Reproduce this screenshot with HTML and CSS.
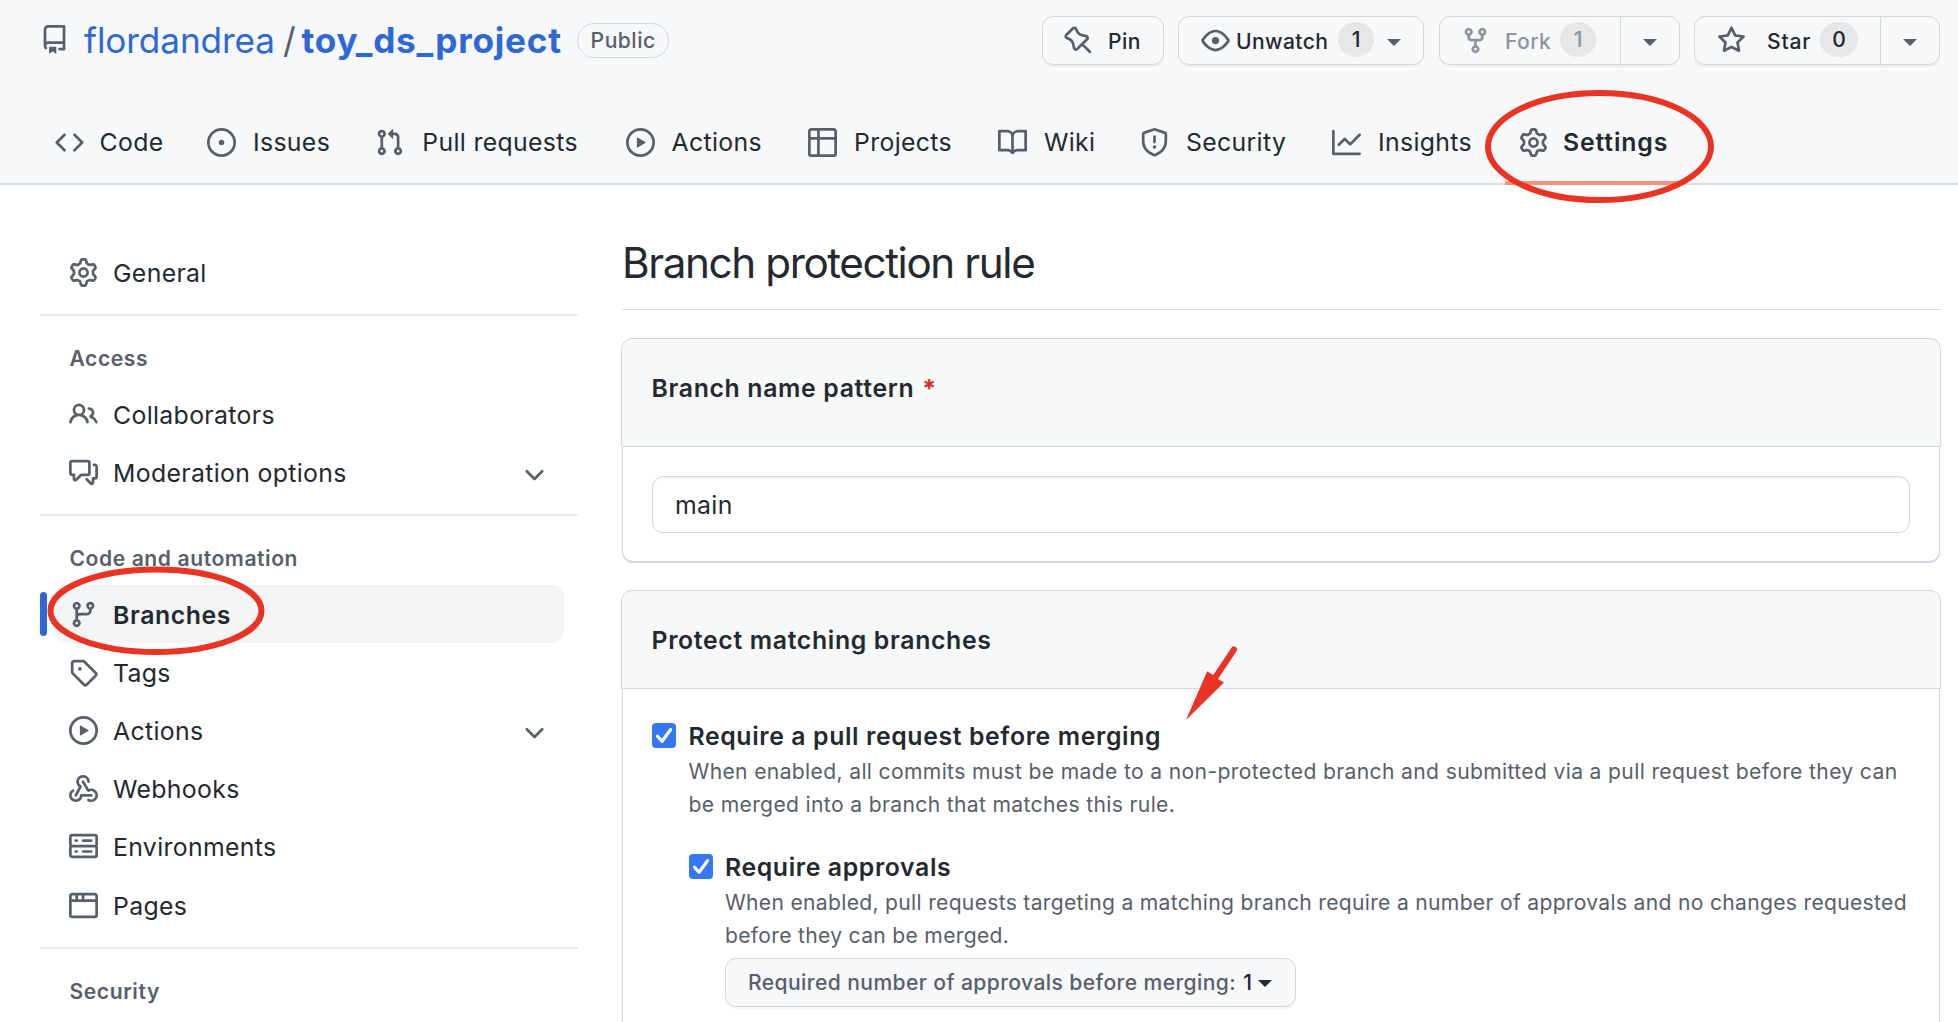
FILE: index.html
```
<!DOCTYPE html>
<html lang="en">
<head>
<meta charset="utf-8">
<title>Branch protection rule</title>
<link rel="stylesheet" href="styles.css">
</head>
<body>
<svg class="sprite" aria-hidden="true">
  <symbol id="repo" viewBox="0 0 16 16"><path d="M2 2.5A2.5 2.5 0 014.5 0h8.75a.75.75 0 01.75.75v12.5a.75.75 0 01-.75.75h-2.5a.75.75 0 110-1.5h1.75v-2h-8a1 1 0 00-.714 1.7.75.75 0 01-1.072 1.05A2.495 2.495 0 012 11.5v-9zm10.5-1V9h-8c-.356 0-.694.074-1 .208V2.5a1 1 0 011-1h8zM5 12.25v3.25a.25.25 0 00.4.2l1.45-1.087a.25.25 0 01.3 0L8.6 15.7a.25.25 0 00.4-.2v-3.25a.25.25 0 00-.25-.25h-3.5a.25.25 0 00-.25.25z"/></symbol>
  <symbol id="pin" viewBox="0 0 16 16"><path d="M4.456.734a1.75 1.75 0 012.826.504l.613 1.327a3.081 3.081 0 002.084 1.707l2.454.584c1.332.317 1.8 1.972.832 2.94L11.06 10l3.72 3.72a.75.75 0 11-1.061 1.06L10 11.06l-2.204 2.205c-.968.968-2.623.5-2.94-.832l-.584-2.454a3.081 3.081 0 00-1.707-2.084l-1.327-.613a1.75 1.75 0 01-.504-2.826L4.456.734zM5.92 1.866a.25.25 0 00-.404-.072L1.794 5.516a.25.25 0 00.072.404l1.328.613A4.582 4.582 0 015.73 9.63l.584 2.454a.25.25 0 00.42.12l5.47-5.47a.25.25 0 00-.12-.42L9.63 5.73a4.581 4.581 0 01-3.098-2.537L5.92 1.866z"/></symbol>
  <symbol id="eye" viewBox="0 0 16 16"><path d="M1.679 7.932c.412-.621 1.242-1.75 2.366-2.717C5.175 4.242 6.527 3.5 8 3.5c1.473 0 2.824.742 3.955 1.715 1.124.967 1.954 2.096 2.366 2.717a.119.119 0 010 .136c-.412.621-1.242 1.75-2.366 2.717C10.825 11.758 9.473 12.5 8 12.5c-1.473 0-2.824-.742-3.955-1.715C2.92 9.818 2.09 8.69 1.679 8.068a.119.119 0 010-.136zM8 2c-1.981 0-3.67.992-4.933 2.078C1.797 5.169.88 6.423.43 7.1a1.619 1.619 0 000 1.798c.45.678 1.367 1.932 2.637 3.024C4.329 13.008 6.019 14 8 14c1.981 0 3.67-.992 4.933-2.078 1.27-1.091 2.187-2.345 2.637-3.023a1.619 1.619 0 000-1.798c-.45-.678-1.367-1.932-2.637-3.023C11.671 2.992 9.981 2 8 2zm0 8a2 2 0 100-4 2 2 0 000 4z"/></symbol>
  <symbol id="fork" viewBox="0 0 16 16"><path d="M5 3.25a.75.75 0 11-1.5 0 .75.75 0 011.5 0zm0 2.122a2.25 2.25 0 10-1.5 0v.878A2.25 2.25 0 005.75 8.5h1.5v2.128a2.251 2.251 0 101.5 0V8.5h1.5a2.25 2.25 0 002.25-2.25v-.878a2.25 2.25 0 10-1.5 0v.878a.75.75 0 01-.75.75h-4.5A.75.75 0 015 6.25v-.878zm3.75 7.378a.75.75 0 11-1.5 0 .75.75 0 011.5 0zm3-8.75a.75.75 0 100-1.5.75.75 0 000 1.5z"/></symbol>
  <symbol id="star" viewBox="0 0 16 16"><path d="M8 .25a.75.75 0 01.673.418l1.882 3.815 4.21.612a.75.75 0 01.416 1.279l-3.046 2.97.719 4.192a.75.75 0 01-1.088.791L8 12.347l-3.766 1.98a.75.75 0 01-1.088-.79l.72-4.194L.818 6.374a.75.75 0 01.416-1.28l4.21-.611L7.327.668A.75.75 0 018 .25zm0 2.445L6.615 5.5a.75.75 0 01-.564.41l-3.097.45 2.24 2.184a.75.75 0 01.216.664l-.528 3.084 2.769-1.456a.75.75 0 01.698 0l2.77 1.456-.53-3.084a.75.75 0 01.216-.664l2.24-2.183-3.096-.45a.75.75 0 01-.564-.41L8 2.694v.001z"/></symbol>
  <symbol id="code" viewBox="0 0 16 16"><path d="M4.72 3.22a.75.75 0 011.06 1.06L2.06 8l3.72 3.72a.75.75 0 11-1.06 1.06L.47 8.53a.75.75 0 010-1.06l4.25-4.25zm6.56 0a.75.75 0 10-1.06 1.06L13.94 8l-3.72 3.72a.75.75 0 101.06 1.06l4.25-4.25a.75.75 0 000-1.06l-4.25-4.25z"/></symbol>
  <symbol id="issue" viewBox="0 0 16 16"><path d="M8 9.5a1.5 1.5 0 100-3 1.5 1.5 0 000 3zM8 0a8 8 0 100 16A8 8 0 008 0zM1.5 8a6.5 6.5 0 1113 0 6.5 6.5 0 01-13 0z"/></symbol>
  <symbol id="pull" viewBox="0 0 16 16"><path d="M7.177 3.073L9.573.677A.25.25 0 0110 .854v4.792a.25.25 0 01-.427.177L7.177 3.427a.25.25 0 010-.354zM3.75 2.5a.75.75 0 100 1.5.75.75 0 000-1.5zm-2.25.75a2.25 2.25 0 113 2.122v5.256a2.251 2.251 0 11-1.5 0V5.372A2.25 2.25 0 011.5 3.25zM11 2.5h-1V4h1a1 1 0 011 1v5.628a2.251 2.251 0 101.5 0V5A2.5 2.5 0 0011 2.5zm1 10.25a.75.75 0 111.5 0 .75.75 0 01-1.5 0zM3.75 12a.75.75 0 100 1.5.75.75 0 000-1.5z"/></symbol>
  <symbol id="play" viewBox="0 0 16 16"><path d="M1.5 8a6.5 6.5 0 1113 0 6.5 6.5 0 01-13 0zM8 0a8 8 0 100 16A8 8 0 008 0zM6.379 5.227A.25.25 0 006 5.442v5.117a.25.25 0 00.379.214l4.264-2.559a.25.25 0 000-.428L6.379 5.227z"/></symbol>
  <symbol id="table" viewBox="0 0 16 16"><path d="M0 1.75C0 .784.784 0 1.75 0h12.5C15.216 0 16 .784 16 1.75v12.5A1.75 1.75 0 0114.25 16H1.75A1.75 1.75 0 010 14.25V1.75zM1.5 6.5v7.75c0 .138.112.25.25.25H5v-8H1.5zM5 5H1.5V1.75a.25.25 0 01.25-.25H5V5zm1.5 1.5v8h7.75a.25.25 0 00.25-.25V6.5h-8zm8-1.5h-8V1.5h7.75a.25.25 0 01.25.25V5z"/></symbol>
  <symbol id="book" viewBox="0 0 16 16"><path d="M0 1.75A.75.75 0 01.75 1h4.253c1.227 0 2.317.59 3 1.501A3.744 3.744 0 0111.006 1h4.245a.75.75 0 01.75.75v10.5a.75.75 0 01-.75.75h-4.507a2.25 2.25 0 00-1.591.659l-.622.621a.75.75 0 01-1.06 0l-.622-.621A2.25 2.25 0 005.258 13H.75a.75.75 0 01-.75-.75V1.75zm8.755 3a2.25 2.25 0 012.25-2.25H14.5v9h-3.757c-.71 0-1.4.201-1.992.572l.004-7.322zm-1.504 7.324l.004-5.073-.002-2.253A2.25 2.25 0 005.003 2.5H1.5v9h3.757a3.75 3.75 0 011.994.574z"/></symbol>
  <symbol id="shield" viewBox="0 0 16 16"><path d="M7.467.133a1.75 1.75 0 011.066 0l5.25 1.68A1.75 1.75 0 0115 3.48V7c0 1.566-.32 3.182-1.303 4.682-.983 1.498-2.585 2.813-5.032 3.855a1.7 1.7 0 01-1.33 0c-2.447-1.042-4.049-2.357-5.032-3.855C1.32 10.182 1 8.566 1 7V3.48a1.75 1.75 0 011.217-1.667l5.25-1.68zm.61 1.429a.25.25 0 00-.153 0l-5.25 1.68a.25.25 0 00-.174.238V7c0 1.358.275 2.666 1.057 3.86.784 1.194 2.121 2.34 4.366 3.297a.2.2 0 00.154 0c2.245-.956 3.582-2.104 4.366-3.298C13.225 9.666 13.5 8.36 13.5 7V3.48a.25.25 0 00-.174-.237l-5.25-1.68zM9 10.5a1 1 0 11-2 0 1 1 0 012 0zm-.25-5.75a.75.75 0 10-1.5 0v3a.75.75 0 001.5 0v-3z"/></symbol>
  <symbol id="graph" viewBox="0 0 16 16"><path d="M1.5 1.75a.75.75 0 00-1.5 0v12.5c0 .414.336.75.75.75h14.5a.75.75 0 000-1.5H1.5V1.75zm14.28 2.53a.75.75 0 00-1.06-1.06L10 7.94 7.53 5.47a.75.75 0 00-1.06 0L3.22 8.72a.75.75 0 001.06 1.06L7 7.06l2.47 2.47a.75.75 0 001.06 0l5.25-5.25z"/></symbol>
  <symbol id="gear" viewBox="0 0 16 16"><path d="M8 0a8.2 8.2 0 0 1 .701.031C9.444.095 9.99.645 10.16 1.29l.288 1.107c.018.066.079.158.212.224.231.114.454.243.668.386.123.082.233.09.299.071l1.103-.303c.644-.176 1.392.021 1.82.63.27.385.506.792.704 1.218.315.675.111 1.422-.364 1.891l-.814.806c-.049.048-.098.147-.088.294.016.257.016.515 0 .772-.01.147.038.246.088.294l.814.806c.475.469.679 1.216.364 1.891a7.977 7.977 0 0 1-.704 1.217c-.428.61-1.176.807-1.82.63l-1.102-.302c-.067-.019-.177-.011-.3.071a5.909 5.909 0 0 1-.668.386c-.133.066-.194.158-.211.224l-.29 1.106c-.168.646-.715 1.196-1.458 1.26a8.006 8.006 0 0 1-1.402 0c-.743-.064-1.289-.614-1.458-1.26l-.289-1.106c-.018-.066-.079-.158-.212-.224a5.738 5.738 0 0 1-.668-.386c-.123-.082-.233-.09-.299-.071l-1.103.303c-.644.176-1.392-.021-1.82-.63a8.12 8.12 0 0 1-.704-1.218c-.315-.675-.111-1.422.363-1.891l.815-.806c.05-.048.098-.147.088-.294a6.214 6.214 0 0 1 0-.772c.01-.147-.038-.246-.088-.294l-.815-.806C.635 6.045.431 5.298.746 4.623a7.92 7.92 0 0 1 .704-1.217c.428-.61 1.176-.807 1.82-.63l1.102.302c.067.019.177.011.3-.071.214-.143.437-.272.668-.386.133-.066.194-.158.211-.224l.29-1.106C6.009.645 6.556.095 7.299.03 7.53.01 7.764 0 8 0Zm-.571 1.525c-.036.003-.108.036-.137.146l-.289 1.105c-.147.561-.549.967-.998 1.189-.173.086-.34.183-.5.29-.417.278-.97.423-1.529.27l-1.103-.303c-.109-.03-.175.016-.195.045-.22.312-.412.644-.573.99-.014.031-.021.11.059.19l.815.806c.411.406.562.957.53 1.456a4.709 4.709 0 0 0 0 .582c.032.499-.119 1.05-.53 1.456l-.815.806c-.081.08-.073.159-.059.19.162.346.353.677.573.989.02.03.085.076.195.046l1.102-.303c.56-.153 1.113-.008 1.53.27.161.107.328.204.501.29.447.222.85.629.997 1.189l.289 1.105c.029.109.101.143.137.146a6.6 6.6 0 0 0 1.142 0c.036-.003.108-.036.137-.146l.289-1.105c.147-.561.549-.967.998-1.189.173-.086.34-.183.5-.29.417-.278.97-.423 1.529-.27l1.103.303c.109.029.175-.016.195-.045.22-.313.411-.644.573-.99.014-.031.021-.11-.059-.19l-.815-.806c-.411-.406-.562-.957-.53-1.456a4.709 4.709 0 0 0 0-.582c-.032-.499.119-1.05.53-1.456l.815-.806c.081-.08.073-.159.059-.19a6.464 6.464 0 0 0-.573-.989c-.02-.03-.085-.076-.195-.046l-1.102.303c-.56.153-1.113.008-1.53-.27a4.44 4.44 0 0 0-.501-.29c-.447-.222-.85-.629-.997-1.189l-.289-1.105c-.029-.11-.101-.143-.137-.146a6.6 6.6 0 0 0-1.142 0ZM11 8a3 3 0 1 1-6 0 3 3 0 0 1 6 0ZM9.5 8a1.5 1.5 0 1 0-3.001.001A1.5 1.5 0 0 0 9.5 8Z"/></symbol>
  <symbol id="people" viewBox="0 0 16 16"><path d="M5.5 3.5a2 2 0 100 4 2 2 0 000-4zM2 5.5a3.5 3.5 0 115.898 2.549 5.507 5.507 0 013.034 4.084.75.75 0 11-1.482.235 4.001 4.001 0 00-7.9 0 .75.75 0 01-1.482-.236A5.507 5.507 0 013.102 8.05 3.49 3.49 0 012 5.5zM11 4a.75.75 0 100 1.5 1.5 1.5 0 01.666 2.844.75.75 0 00-.416.672v.352a.75.75 0 00.574.73c1.2.289 2.162 1.2 2.522 2.372a.75.75 0 101.434-.44 5.01 5.01 0 00-2.56-3.012A3 3 0 0011 4z"/></symbol>
  <symbol id="discussion" viewBox="0 0 16 16"><path d="M1.5 2.75a.25.25 0 01.25-.25h8.5a.25.25 0 01.25.25v5.5a.25.25 0 01-.25.25h-3.5a.75.75 0 00-.53.22L3.5 11.44V9.25a.75.75 0 00-.75-.75h-1a.25.25 0 01-.25-.25v-5.5zM1.75 1A1.75 1.75 0 000 2.75v5.5C0 9.216.784 10 1.75 10H2v1.543a1.457 1.457 0 002.487 1.03L7.061 10h3.189A1.75 1.75 0 0012 8.25v-5.5A1.75 1.75 0 0010.25 1h-8.5zM14.5 4.75a.25.25 0 00-.25-.25h-.5a.75.75 0 110-1.5h.5c.966 0 1.75.784 1.75 1.75v5.5A1.75 1.75 0 0114.25 12H14v1.543a1.457 1.457 0 01-2.487 1.03L9.22 12.28a.75.75 0 111.06-1.06l2.22 2.22v-2.19a.75.75 0 01.75-.75h1a.25.25 0 00.25-.25v-5.5z"/></symbol>
  <symbol id="branch" viewBox="0 0 16 16"><path d="M11.75 2.5a.75.75 0 100 1.5.75.75 0 000-1.5zm-2.25.75a2.25 2.25 0 113 2.122V6A2.5 2.5 0 0110 8.5H6a1 1 0 00-1 1v1.128a2.251 2.251 0 11-1.5 0V5.372a2.25 2.25 0 111.5 0v1.836A2.492 2.492 0 016 7h4a1 1 0 001-1v-.628A2.25 2.25 0 019.5 3.25zM4.25 12a.75.75 0 100 1.5.75.75 0 000-1.5zM3.5 3.25a.75.75 0 111.5 0 .75.75 0 01-1.5 0z"/></symbol>
  <symbol id="tag" viewBox="0 0 16 16"><path d="M2.5 7.775V2.75a.25.25 0 01.25-.25h5.025a.25.25 0 01.177.073l6.25 6.25a.25.25 0 010 .354l-5.025 5.025a.25.25 0 01-.354 0l-6.25-6.25a.25.25 0 01-.073-.177zm-1.5 0V2.75C1 1.784 1.784 1 2.75 1h5.025c.464 0 .91.184 1.238.513l6.25 6.25a1.75 1.75 0 010 2.474l-5.026 5.026a1.75 1.75 0 01-2.474 0l-6.25-6.25A1.75 1.75 0 011 7.775zM6 5a1 1 0 100 2 1 1 0 000-2z"/></symbol>
  <symbol id="webhook" viewBox="0 0 16 16"><path d="M5.5 4.25a2.25 2.25 0 014.5 0 .75.75 0 001.5 0 3.75 3.75 0 10-6.14 2.889l-2.272 4.258a.75.75 0 001.324.706L7 7.25a.75.75 0 00-.309-1.015A2.25 2.25 0 015.5 4.25z"/><path d="M7.364 3.607a.75.75 0 011.03.257l2.608 4.349a3.75 3.75 0 11-.628 6.785.75.75 0 01.752-1.299 2.25 2.25 0 10-.033-3.88.75.75 0 01-1.03-.256L7.107 4.636a.75.75 0 01.257-1.03z"/><path d="M2.9 8.776A.75.75 0 012.625 9.8 2.25 2.25 0 106 11.75a.75.75 0 01.75-.751h5.5a.75.75 0 010 1.5H7.425a3.75 3.75 0 11-5.55-3.998.75.75 0 011.024.274z"/></symbol>
  <symbol id="server" viewBox="0 0 16 16"><path d="M1.75 1A1.75 1.75 0 000 2.75v4c0 .372.116.717.314 1a1.742 1.742 0 00-.314 1v4c0 .966.784 1.75 1.75 1.75h12.5A1.75 1.75 0 0016 12.75v-4c0-.372-.116-.717-.314-1 .198-.283.314-.628.314-1v-4A1.75 1.75 0 0014.25 1H1.75zm0 7.5a.25.25 0 00-.25.25v4c0 .138.112.25.25.25h12.5a.25.25 0 00.25-.25v-4a.25.25 0 00-.25-.25H1.75zM1.5 2.75a.25.25 0 01.25-.25h12.5a.25.25 0 01.25.25v4a.25.25 0 01-.25.25H1.75a.25.25 0 01-.25-.25v-4zm5.5 2A.75.75 0 017.75 4h4.5a.75.75 0 010 1.5h-4.5A.75.75 0 017 4.75zM7.75 10a.75.75 0 000 1.5h4.5a.75.75 0 000-1.5h-4.5zM3 4.75A.75.75 0 013.75 4h.5a.75.75 0 010 1.5h-.5A.75.75 0 013 4.75zM3.75 10a.75.75 0 000 1.5h.5a.75.75 0 000-1.5h-.5z"/></symbol>
  <symbol id="browser" viewBox="0 0 16 16"><path d="M0 2.75C0 1.784.784 1 1.75 1h12.5c.966 0 1.75.784 1.75 1.75v10.5A1.75 1.75 0 0114.25 15H1.75A1.75 1.75 0 010 13.25V2.75zm1.75-.25a.25.25 0 00-.25.25V4.5h2v-2H1.75zM5 2.5v2h2v-2H5zm3.5 0v2h6V2.75a.25.25 0 00-.25-.25H8.5zm6 3.5h-13v7.25c0 .138.112.25.25.25h12.5a.25.25 0 00.25-.25V6z"/></symbol>
  <symbol id="chevron" viewBox="0 0 16 16"><path d="M12.78 6.22a.75.75 0 010 1.06l-4.25 4.25a.75.75 0 01-1.06 0L3.22 7.28a.75.75 0 011.06-1.06L8 9.94l3.72-3.72a.75.75 0 011.06 0z"/></symbol>
  <symbol id="check" viewBox="0 0 24 25"><path d="M5.5 13.2l4.6 5.1L18.6 6.6" fill="none" stroke="#fff" stroke-width="3.2" stroke-linecap="round" stroke-linejoin="round"/></symbol>
</svg>

<header class="repo-header">
  <div class="repo-bar">
    <svg class="icon"><use href="#repo"/></svg>
    <div class="repo-title"><a class="owner">flordandrea</a><span class="slash">/</span><a class="name">toy_ds_project</a></div>
    <span class="visibility">Public</span>
    <div class="repo-actions">
      <button class="btn btn-pin"><svg class="icon"><use href="#pin"/></svg><span class="label">Pin</span></button>
      <button class="btn btn-watch"><svg class="icon"><use href="#eye"/></svg><span class="label">Unwatch</span><span class="counter">1</span><i class="caret"></i></button>
      <div class="btn-group">
        <button class="btn btn-fork"><svg class="icon"><use href="#fork"/></svg><span class="label">Fork</span><span class="counter">1</span></button>
        <button class="btn btn-more"><i class="caret"></i></button>
      </div>
      <div class="btn-group">
        <button class="btn btn-star"><svg class="icon"><use href="#star"/></svg><span class="label">Star</span><span class="counter">0</span></button>
        <button class="btn btn-more"><i class="caret"></i></button>
      </div>
    </div>
  </div>
  <nav class="tabs">
    <a class="tab tab-code"><svg class="icon"><use href="#code"/></svg>Code</a>
    <a class="tab"><svg class="icon"><use href="#issue"/></svg>Issues</a>
    <a class="tab tab-pulls"><svg class="icon"><use href="#pull"/></svg>Pull requests</a>
    <a class="tab"><svg class="icon"><use href="#play"/></svg>Actions</a>
    <a class="tab"><svg class="icon"><use href="#table"/></svg>Projects</a>
    <a class="tab"><svg class="icon"><use href="#book"/></svg>Wiki</a>
    <a class="tab"><svg class="icon"><use href="#shield"/></svg>Security</a>
    <a class="tab"><svg class="icon"><use href="#graph"/></svg>Insights</a>
    <a class="tab tab-selected"><svg class="icon"><use href="#gear"/></svg>Settings</a>
  </nav>
</header>

<div class="layout">
  <aside class="sidebar">
    <div class="menu-group">
      <a class="item"><svg class="icon"><use href="#gear"/></svg>General</a>
    </div>
    <div class="menu-group">
      <h3>Access</h3>
      <a class="item"><svg class="icon"><use href="#people"/></svg>Collaborators</a>
      <a class="item"><svg class="icon"><use href="#discussion"/></svg>Moderation options<svg class="icon chevron"><use href="#chevron"/></svg></a>
    </div>
    <div class="menu-group">
      <h3>Code and automation</h3>
      <a class="item item-current"><svg class="icon"><use href="#branch"/></svg>Branches</a>
      <a class="item"><svg class="icon"><use href="#tag"/></svg>Tags</a>
      <a class="item"><svg class="icon"><use href="#play"/></svg>Actions<svg class="icon chevron"><use href="#chevron"/></svg></a>
      <a class="item"><svg class="icon"><use href="#webhook"/></svg>Webhooks</a>
      <a class="item"><svg class="icon"><use href="#server"/></svg>Environments</a>
      <a class="item item-last"><svg class="icon"><use href="#browser"/></svg>Pages</a>
    </div>
    <div class="menu-group">
      <h3>Security</h3>
    </div>
  </aside>

  <main class="content">
    <h1>Branch protection rule</h1>
    <section class="box box-pattern">
      <div class="box-header"><span>Branch name pattern</span><span class="required">*</span></div>
      <div class="box-body"><div class="field">main</div></div>
    </section>
    <section class="box box-protect">
      <div class="box-header"><span>Protect matching branches</span></div>
      <div class="box-body">
        <div class="rule">
          <svg class="checkbox"><use href="#check"/></svg>
          <div class="rule-text">
            <strong>Require a pull request before merging</strong>
            <p>When enabled, all commits must be made to a non-protected branch and submitted via a pull request before they can<br>be merged into a branch that matches this rule.</p>
            <div class="rule rule-nested">
              <svg class="checkbox"><use href="#check"/></svg>
              <div class="rule-text">
                <strong>Require approvals</strong>
                <p class="tight">When enabled, pull requests targeting a matching branch require a number of approvals and no changes requested<br>before they can be merged.</p>
                <button class="btn btn-select"><span class="muted">Required number of approvals before merging:</span><span>1</span><i class="caret"></i></button>
              </div>
            </div>
          </div>
        </div>
      </div>
    </section>
  </main>
</div>

<svg class="annotations" viewBox="0 0 1958 1022">
  <ellipse cx="1599.5" cy="146.5" rx="111.5" ry="53.5"/>
  <ellipse cx="156" cy="610.8" rx="105.5" ry="41.2"/>
  <path class="shaft" d="M1234 649.5L1215 678"/>
  <path class="head" d="M1186 720L1207.2 671.2L1214 675.5L1217 678.5L1224 682.5Z"/>
</svg>
</body>
</html>
```
FILE: styles.css
```
* { box-sizing: border-box; }

body {
  margin: 0;
  width: 1958px;
  height: 1022px;
  overflow: hidden;
  position: relative;
  background: #fff;
  color: #24292f;
  font-family: Inter, "Liberation Sans", sans-serif;
  font-size: 24.8px;
  letter-spacing: .34px;
}

.sprite { display: none; }

.icon {
  width: 29px;
  height: 29px;
  flex: none;
  fill: #57606a;
  fill-rule: evenodd;
}

/* Repository header */
.repo-header {
  height: 185px;
  background: #f6f8fa;
  border-bottom: 2px solid #d8dee4;
}

.repo-bar {
  height: 81px;
  padding: 0 18px 0 40px;
  display: flex;
  align-items: center;
}
.repo-bar > .icon { margin-bottom: 2px; }

.repo-title {
  margin: 0 0 2px 15px;
  font-size: 35.2px;
  line-height: 44px;
  letter-spacing: -.12px;
  white-space: nowrap;
  color: #2f68d6;
}

.repo-title .slash { margin: 0 6px 0 8px; color: #57606a; }
.repo-title .name { font-weight: 700; letter-spacing: .76px; }

.visibility {
  margin: 0 0 1px 15px;
  width: 92.5px;
  height: 35px;
  border: 1px solid #d0d7de;
  border-radius: 18px;
  font-size: 21.1px;
  font-weight: 500;
  line-height: 34px;
  letter-spacing: .5px;
  text-align: center;
  color: #57606a;
}

.repo-actions { margin-left: auto; display: flex; gap: 14.5px; }

.btn {
  display: flex;
  align-items: center;
  height: 49px;
  padding: 0;
  background: #f6f8fa;
  border: 1px solid #d5d8da;
  border-radius: 11px;
  box-shadow: 0 2px 0 rgba(27, 31, 36, .04);
  color: #24292f;
  font: 500 21.1px/30px Inter, "Liberation Sans", sans-serif;
  letter-spacing: .4px;
  white-space: nowrap;
}
.btn .label { margin-top: 2px; }

.btn-pin { width: 122px; padding-left: 21px; gap: 15.5px; }
.btn-watch { width: 246px; padding-left: 22px; gap: 6px; }
.btn-watch .counter { margin-left: 4px; }
.btn-watch .caret { margin-left: 7px; }
.btn-group { display: flex; }
.btn-group .btn:first-child { border-radius: 11px 0 0 11px; }
.btn-group .btn:last-child { border-radius: 0 11px 11px 0; margin-left: -1px; }
.btn-fork { width: 182px; padding-left: 21px; color: #8c959f; }
.btn-fork .icon { margin-right: 15.5px; fill: #8c959f; }
.btn-fork .counter, .btn-star .counter { margin-left: 9px; }
.btn-star { width: 187px; padding-left: 22px; }
.btn-star .icon { margin-right: 21px; }
.btn-star .label { letter-spacing: .8px; }
.btn-star .counter { width: 38px; }
.btn-more { width: 60px; justify-content: center; }

.counter {
  width: 36px;
  height: 35px;
  margin-bottom: 2px;
  border-radius: 18px;
  background: #e5e7e9;
  line-height: 36px;
  text-align: center;
}

.caret {
  border: solid transparent;
  border-width: 7px 7px 0;
  border-top-color: currentColor;
  margin-top: 4px;
}
.repo-actions .caret { border-top-color: #57606a; }

.tabs {
  height: 104px;
  padding-left: 40px;
  display: grid;
  grid-template-columns: 152.5px 168px 250.5px 182.5px 190px 142px 192px 187px 177px;
}

.tab {
  display: flex;
  align-items: center;
  gap: 17px;
  padding: 18px 0 0 14.5px;
  white-space: nowrap;
}
.tab-code { gap: 16px; }
.tab-pulls { gap: 18.3px; }

.tab-selected {
  gap: 15px;
  font-weight: 600;
  letter-spacing: .85px;
  border-bottom: 4px solid #f4917a;
  padding-top: 22px;
}

/* Settings layout */
.layout { display: flex; height: 837px; }

.sidebar { width: 538px; margin-left: 40px; padding-top: 58px; }

.menu-group { padding-bottom: 13px; border-bottom: 2px solid #e8ebef; }
.menu-group:last-child { border: 0; padding: 0; }

.menu-group h3 {
  margin: 0;
  height: 69px;
  padding: 29px 0 0 29.5px;
  font-size: 21.1px;
  line-height: 27px;
  font-weight: 600;
  letter-spacing: .57px;
  color: #57606a;
}

.item {
  position: relative;
  display: flex;
  align-items: center;
  height: 58px;
  margin: 0 14px 0 15px;
  padding: 2px 15px 0 14px;
  gap: 15px;
  border-radius: 11px;
}
.item .icon { margin-top: -2px; }
.item .chevron { margin: 0 0 0 auto; }
.item-last { height: 59px; padding-top: 3px; }

.item-current { background: #f3f4f6; font-weight: 600; letter-spacing: .6px; }
.item-current::before {
  content: "";
  position: absolute;
  left: -15px;
  top: 7px;
  width: 7px;
  height: 44px;
  border-radius: 4px;
  background: #2f68d6;
}

.content { width: 1320px; margin-left: 43px; padding-top: 50px; }

h1 {
  margin: 0 0 28px 1px;
  height: 75px;
  border-bottom: 1px solid #d8dee4;
  font-size: 42.2px;
  line-height: 56px;
  font-weight: 400;
  letter-spacing: -1.4px;
}

.box-pattern { margin-bottom: 27px; }

.box-header {
  display: flex;
  align-items: center;
  gap: 8px;
  padding: 0 29.5px;
  background: #f6f8fa;
  border: 1px solid #d0d7de;
  border-radius: 11px 11px 0 0;
  font-weight: 600;
  letter-spacing: .66px;
}
.box-pattern .box-header { height: 109px; padding-bottom: 10px; }
.box-protect .box-header { height: 99px; }
.required { color: #c8302f; font-weight: 700; }

.box-body { margin: 0 1px; border: 1px solid #d0d7de; border-top: 0; }
.box-pattern .box-body {
  height: 116px;
  padding: 29px;
  border-bottom-width: 2px;
  border-radius: 0 0 11px 11px;
}
.box-protect .box-body { height: 333px; padding: 30px 29px 0; border-bottom: 0; }

.field {
  height: 57px;
  padding-left: 22px;
  border: 1px solid #d0d7de;
  border-radius: 11px;
  box-shadow: inset 0 2px 0 rgba(208, 215, 222, .2);
  line-height: 57px;
}

.rule { display: flex; gap: 12.5px; }
.checkbox {
  flex: none;
  width: 24px;
  height: 25px;
  margin-top: 4px;
  border-radius: 4px;
  background: #3478f6;
}
.rule-text strong {
  display: block;
  font-weight: 600;
  line-height: 34px;
  letter-spacing: .62px;
}
.rule-text p {
  margin: 2px 0 0;
  font-size: 21.1px;
  line-height: 33px;
  letter-spacing: .35px;
  color: #57606a;
  white-space: nowrap;
}
.rule-text p.tight { letter-spacing: .305px; }
.rule-nested { margin-top: 29px; }

.btn-select {
  width: 571px;
  margin-top: 6px;
  padding-left: 22px;
  gap: 6px;
}
.btn-select .muted { color: #57606a; margin-right: 1px; }
.btn-select .caret { margin-top: 2px; }

/* Hand-drawn marks above the page */
.annotations {
  position: absolute;
  left: 0;
  top: 0;
  width: 1958px;
  height: 1022px;
  fill: none;
  stroke: #ea3323;
  stroke-width: 6;
  pointer-events: none;
}
.annotations .shaft { stroke-linecap: round; }
.annotations .head { fill: #ea3323; stroke: none; }
```
